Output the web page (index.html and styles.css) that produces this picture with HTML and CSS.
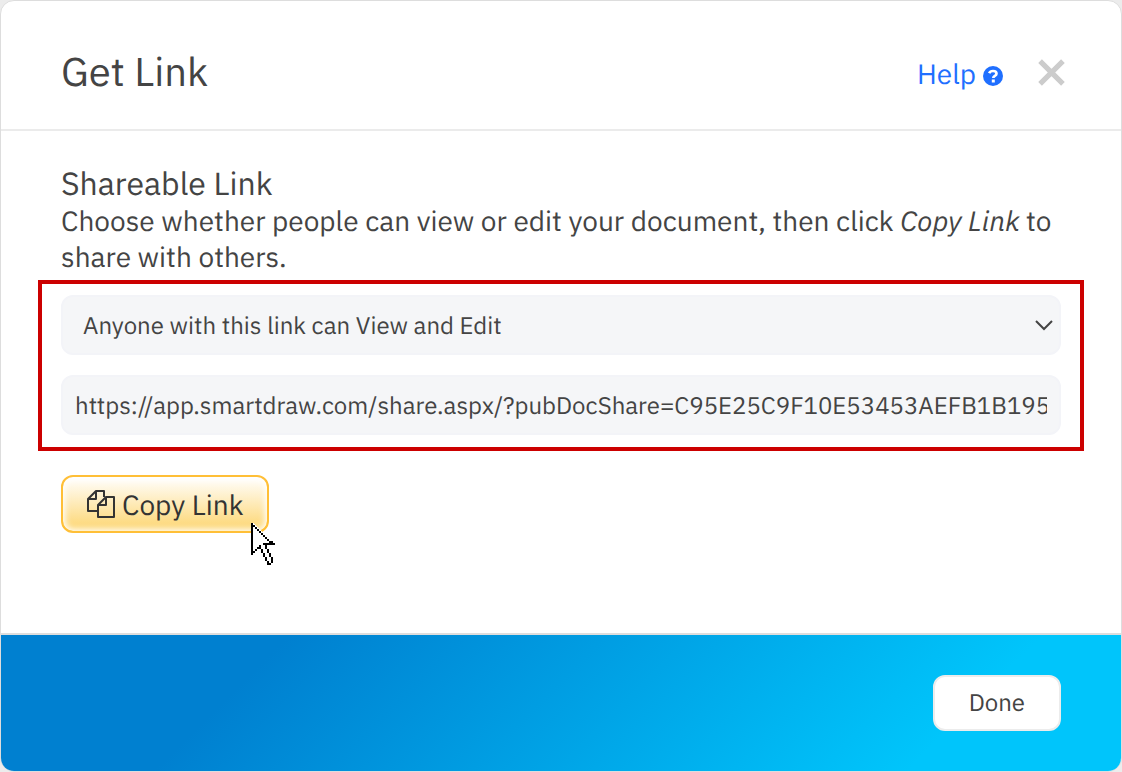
FILE: index.html
```html
<!DOCTYPE html>
<html lang="en">
<head>
<meta charset="utf-8">
<title>Get Link</title>
<link rel="stylesheet" href="styles.css">
</head>
<body>
<main class="dialog">
  <header class="dialog-header">
    <h1 class="title">Get Link</h1>
    <a class="help" href="#help">Help
      <svg class="help-icon" viewBox="0 0 20 20" aria-hidden="true"><circle cx="10" cy="10" r="10" fill="#1f6fff"/><path d="M6.2 7.2C6.9 5.6 8.1 5 10 5c2.100 0 3.500 1 3.500 2.700 0 2.200-3.200 2.200-3.200 4.200" fill="none" stroke="#fff" stroke-width="2.700"/><path d="M8.800 13.400h3V16.400h-3z" fill="#fff"/></svg>
    </a>
    <button class="close" type="button" aria-label="Close">
      <svg class="close-icon" viewBox="0 0 26 26" aria-hidden="true"><path d="M2 2l22 22M24 2L2 24" stroke="#ccc" stroke-width="5"/></svg>
    </button>
  </header>
  <section class="dialog-body">
    <h2 class="subtitle">Shareable Link</h2>
    <p class="intro">Choose whether people can view or edit your document, then click <em>Copy Link</em> to share with others.</p>
    <div class="fields">
      <div class="select-wrap">
        <select class="field field-select" aria-label="Link permission">
          <option>Anyone with this link can View and Edit</option>
        </select>
        <svg class="chevron" viewBox="0 0 18 11" aria-hidden="true"><path d="M1 1l8 8 8-8" fill="none" stroke="#444" stroke-width="2"/></svg>
      </div>
      <input class="field" type="text" readonly aria-label="Shareable link" value="https://app.smartdraw.com/share.aspx/?pubDocShare=C95E25C9F10E53453AEFB1B19588">
    </div>
    <button class="copy" type="button">
      <svg class="copy-icon" viewBox="0 0 28 28" aria-hidden="true"><g fill="none" stroke="#333" stroke-width="2" stroke-linejoin="round"><path d="M11 21H1V9l8-8h8v6"/><path d="M9 1v8H1"/><path d="M11 15l8-8h8v20H11z"/><path d="M19 7v8h-8"/></g></svg>
      Copy Link
      <svg class="pointer" viewBox="0 0 12 21" shape-rendering="crispEdges" aria-hidden="true"><path d="M0 0h1l10 10v1H8v2l1 2 1 2 1 3-1 1H9l-1-1-1-3-1-2-1-2-1-1-3 3H0z" fill="#fff"/><path d="M.5 0v16M1 1.500h1M2 2.500h1M3 3.500h1M4 4.500h1M5 5.500h1M6 6.500h1M7 7.500h1M8 8.500h1M9 9.500h2M6 10.500h6M4 11.500h1M7 11.500h1M3 12.500h2M7 12.500h1M2 13.500h1M5 13.500h1M8 13.500h1M1 14.500h1M5 14.500h1M8 14.500h1M6 15.500h1M9 15.500h1M6 16.500h1M9 16.500h1M7 17.500h1M10 17.500h1M7 18.500h1M10 18.500h1M8 19.500h1M10 19.500h1M8 20.500h2" fill="none" stroke="#000"/></svg>
    </button>
  </section>
  <footer class="dialog-footer">
    <button class="done" type="button">Done</button>
  </footer>
</main>
</body>
</html>
```
FILE: styles.css
```css
* { box-sizing: border-box; }
body {
  margin: 0;
  background: #ececec;
  color: #444;
  font-family: "IBM Plex Sans", Roboto, sans-serif;
  text-rendering: geometricPrecision;
}
button, input, select { font: inherit; color: inherit; text-rendering: inherit; }
.dialog {
  display: flex;
  flex-direction: column;
  min-height: 100vh;
  border: 1px solid #ddd;
  border-radius: 14px;
  background: #fff;
  overflow: hidden;
}
.dialog-header {
  display: flex;
  align-items: center;
  padding: 44px 56px 32px 60px;
  border-bottom: 2px solid #ebebeb;
}
.title {
  margin: 0;
  flex: 1;
  font-size: 40px;
  line-height: 52px;
  font-weight: 400;
}
.help {
  display: flex;
  align-items: center;
  gap: 7px;
  margin-right: 35px;
  padding-top: 6px;
  color: #1f6fff;
  font-size: 28px;
  line-height: 32px;
  text-decoration: none;
}
.help-icon { width: 20px; height: 20px; margin-top: 3px; }
.close {
  display: flex;
  padding: 2px 0 0;
  border: 0;
  background: none;
}
.close-icon { width: 27px; height: 27px; }
.dialog-body {
  flex: 1;
  padding: 34px 60px 40px;
}
.subtitle {
  margin: 0;
  padding-bottom: 2px;
  font-size: 32px;
  line-height: 36px;
  font-weight: 400;
}
.intro {
  margin: 0;
  font-size: 28px;
  line-height: 36px;
}
.fields {
  display: grid;
  gap: 20px;
  margin: 5px -23px 24px;
  padding: 11px 19px 12px;
  border: 4px solid #c00;
}
.select-wrap { position: relative; display: grid; }
.field {
  width: 100%;
  height: 60px;
  padding: 0 12px;
  border: 2px solid #f3f4f8;
  border-radius: 12px;
  background: #f5f6f8;
  font-size: 24px;
}
.field-select { appearance: none; padding: 0 20px; }
.chevron {
  position: absolute;
  right: 8px;
  top: 25px;
  width: 18px;
  height: 11px;
  pointer-events: none;
}
.copy {
  position: relative;
  display: flex;
  align-items: center;
  gap: 7px;
  height: 58px;
  padding: 0 24px;
  border: 2px solid #ffbf37;
  border-radius: 12px;
  background: linear-gradient(#fff, #fdd56e);
  box-shadow: inset 0 0 6px 2px #fff;
  color: #333;
  font-size: 28px;
}
.copy-icon { width: 28px; height: 28px; }
.pointer {
  position: absolute;
  left: 188px;
  top: 46px;
  width: 24px;
  height: 42px;
}
.dialog-footer {
  display: flex;
  justify-content: flex-end;
  padding: 40px 60px;
  border-top: 2px solid #ddd;
  background: linear-gradient(135deg, #0080d0 23%, #00c5fb 83%) padding-box;
}
.done {
  height: 56px;
  padding: 0 34px 2px;
  border: 2px solid #ececec;
  border-radius: 12px;
  background: #fff;
  font-size: 24px;
}
```
